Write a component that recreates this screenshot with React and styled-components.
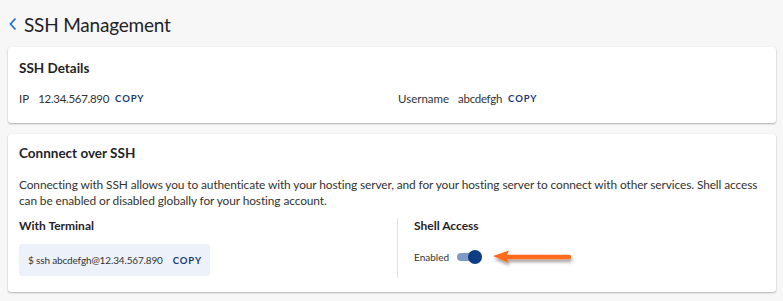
import React from "react";
import styled, { createGlobalStyle } from "styled-components";

const Global = createGlobalStyle`
  html, body { margin: 0; padding: 0; background: #f7f7f7; }
  body { font-family: Lato, "Open Sans", sans-serif; color: #222; }
`;

const Page = styled.div`
  padding: 8px 7px 8px 8px;
  display: flex;
  flex-direction: column;
  gap: 11px;
`;

const Header = styled.div`
  display: flex;
  align-items: center;
  gap: 6px;
  height: 30px;
  margin-top: 1px;
  margin-bottom: -3px;
`;

const Back = styled.span`
  display: flex;
  color: #2a6fd6;
`;

const Title = styled.h1`
  margin: 0;
  font-size: 19px;
  letter-spacing: -0.2px;
  font-weight: 400;
  color: #1f2329;
`;

const Card = styled.section`
  background: #fff;
  border-radius: 3px;
  box-shadow: 0 1px 2px rgba(0, 0, 0, 0.28), 0 0 1px rgba(0, 0, 0, 0.08);
  padding: ${(p) => p.$pad || "10px 11px"};
`;

const CardTitle = styled.h2`
  margin: 0;
  font-size: 13.5px;
  font-weight: 700;
  color: #1f2329;
  line-height: 20px;
`;

const DetailsRow = styled.div`
  display: grid;
  grid-template-columns: 379px 1fr;
  margin-top: 10px;
  height: 20px;
  align-items: center;
`;

const Field = styled.div`
  display: flex;
  align-items: center;
  font-size: 11.5px;
  color: #333;
`;

const Label = styled.span`
  margin-right: 9px;
`;

const Value = styled.span`
  margin-right: 6px;
  letter-spacing: -0.3px;
`;

const Copy = styled.span`
  font-size: 9.5px;
  font-weight: 700;
  letter-spacing: 0.9px;
  color: #1b3a73;
`;

const Para = styled.p`
  margin: 14px 0 0;
  font-size: 11.9px;
  letter-spacing: -0.1px;
  line-height: 16px;
  color: #333;
`;

const Columns = styled.div`
  display: grid;
  grid-template-columns: 378px 1fr;
  margin-top: 9px;
`;

const Col = styled.div`
  display: flex;
  flex-direction: column;
  ${(p) => p.$divided && `border-left: 1px solid #e2e2e2; padding-left: 16px;`}
  padding-bottom: 2px;
`;

const SubTitle = styled.h3`
  margin: 0;
  font-size: 12px;
  font-weight: 700;
  line-height: 16px;
  color: #1f2329;
`;

const CodeBox = styled.div`
  margin-top: 10px;
  align-self: flex-start;
  background: #edf2fa;
  border-radius: 3px;
  height: 32px;
  padding: 0 8px 0 9px;
  display: flex;
  align-items: center;
  gap: 10px;
  font-size: 10px;
  letter-spacing: -0.15px;
  color: #333;
`;

const ToggleRow = styled.div`
  margin-top: 15px;
  display: flex;
  align-items: center;
  font-size: 10px;
  color: #333;
  gap: 8px;
`;

const Track = styled.span`
  position: relative;
  width: 23px;
  height: 8px;
  border-radius: 4px;
  background: #7f9bc3;
  display: inline-block;
`;

const Knob = styled.span`
  position: absolute;
  right: -2px;
  top: -3px;
  width: 14px;
  height: 14px;
  border-radius: 50%;
  background: #0e3d82;
`;

const Arrow = styled.svg`
  margin-left: 5px;
  overflow: visible;
`;

export default function App() {
  return (
    <>
      <Global />
      <Page>
        <Header>
          <Back>
            <svg width="10" height="14" viewBox="0 0 10 14">
              <path d="M7.5 1.5 L2.5 7 L7.5 12.5" fill="none" stroke="currentColor" strokeWidth="1.8" />
            </svg>
          </Back>
          <Title>SSH Management</Title>
        </Header>
        <Card $pad="11px 11px 15px">
          <CardTitle>SSH Details</CardTitle>
          <DetailsRow>
            <Field>
              <Label>IP</Label>
              <Value>12.34.567.890</Value>
              <Copy>COPY</Copy>
            </Field>
            <Field>
              <Label>Username</Label>
              <Value>abcdefgh</Value>
              <Copy>COPY</Copy>
            </Field>
          </DetailsRow>
        </Card>
        <Card $pad="9px 11px 14px">
          <CardTitle>Connnect over SSH</CardTitle>
          <Para>
            Connecting with SSH allows you to authenticate with your hosting server, and for your hosting server to connect with other services. Shell access can be enabled or disabled globally for your hosting account.
          </Para>
          <Columns>
            <Col>
              <SubTitle>With Terminal</SubTitle>
              <CodeBox>
                <span>$ ssh abcdefgh@12.34.567.890</span>
                <Copy>COPY</Copy>
              </CodeBox>
            </Col>
            <Col $divided>
              <SubTitle>Shell Access</SubTitle>
              <ToggleRow>
                <span>Enabled</span>
                <Track>
                  <Knob />
                </Track>
                <Arrow width="80" height="16" viewBox="0 0 80 16">
                  <defs>
                    <filter id="sh" x="-20%" y="-50%" width="140%" height="250%">
                      <feDropShadow dx="1" dy="3" stdDeviation="1.5" floodColor="#000" floodOpacity="0.35" />
                    </filter>
                  </defs>
                  <g filter="url(#sh)">
                    <line x1="12" y1="8" x2="76" y2="8" stroke="#ff6a1a" strokeWidth="4.5" strokeLinecap="round" />
                    <polygon points="0,7 16,1.5 13,8 16,14" fill="#ff6a1a" />
                  </g>
                </Arrow>
              </ToggleRow>
            </Col>
          </Columns>
        </Card>
      </Page>
    </>
  );
}
